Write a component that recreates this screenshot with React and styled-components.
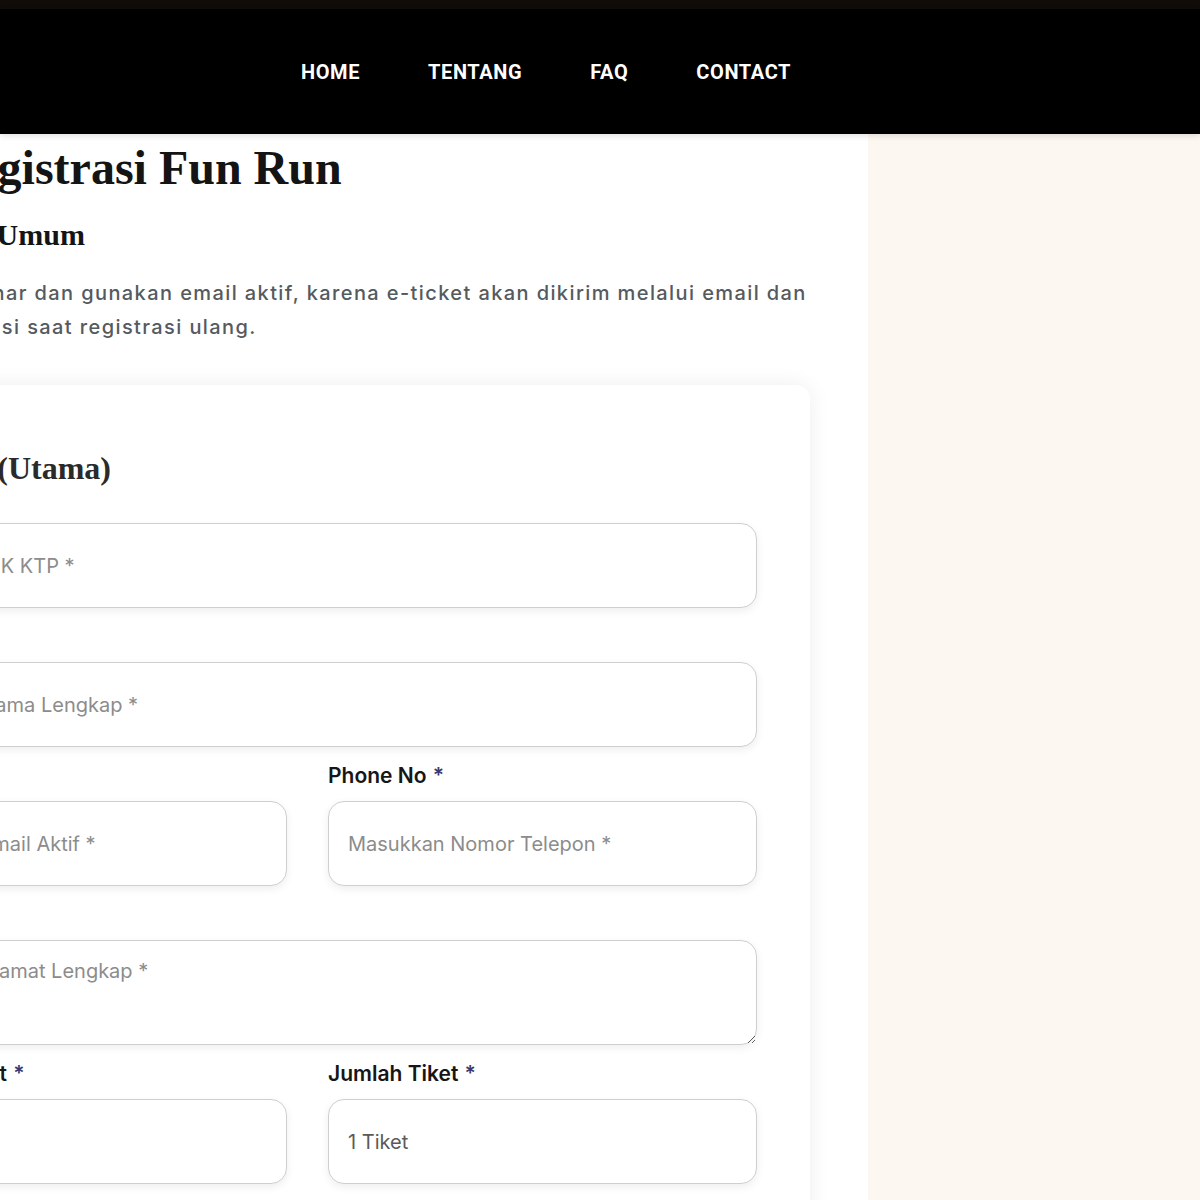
import React from 'react';
import styled, { createGlobalStyle } from 'styled-components';

const GlobalStyle = createGlobalStyle`
  body {
    margin: 0;
    background: #fcf7f1;
    overflow: hidden;
    font-family: Inter, "Noto Sans", sans-serif;
  }
  * { box-sizing: border-box; }
`;

const navItems = ['HOME', 'TENTANG', 'FAQ', 'CONTACT'];

function App() {
  return (
    <>
      <GlobalStyle />
      <TopStrip />
      <Nav>
        {navItems.map((item) => (
          <NavLink key={item}>{item}</NavLink>
        ))}
      </Nav>
      <Body>
        <Main>
          <Content>
            <Title>Form Registrasi Fun Run</Title>
            <SubTitle>Form Peserta Umum</SubTitle>
            <Intro>
              Isi data dengan benar dan gunakan email aktif, karena e-ticket akan dikirim melalui email dan
              <br />
              dan untuk verifikasi saat registrasi ulang.
            </Intro>
            <Card>
              <CardTitle>Peserta 1 (Utama)</CardTitle>
              <Field>
                <Label>NIK KTP <Req>*</Req></Label>
                <Input placeholder="Masukkan NIK KTP *" />
              </Field>
              <Field>
                <Label>Nama <Req>*</Req></Label>
                <Input placeholder="Masukkan Nama Lengkap *" />
              </Field>
              <Row>
                <Field>
                  <Label>Email <Req>*</Req></Label>
                  <Input placeholder="Masukkan Email Aktif *" />
                </Field>
                <Field>
                  <Label>Phone No <Req>*</Req></Label>
                  <Input placeholder="Masukkan Nomor Telepon *" />
                </Field>
              </Row>
              <Field>
                <Label>Alamat <Req>*</Req></Label>
                <TextArea placeholder="Masukkan Alamat Lengkap *" />
              </Field>
              <Row>
                <Field>
                  <Label>Kategori Event <Req>*</Req></Label>
                  <Select defaultValue="">
                    <option value=""></option>
                  </Select>
                </Field>
                <Field>
                  <Label>Jumlah Tiket <Req>*</Req></Label>
                  <Select defaultValue="1">
                    <option value="1">1 Tiket</option>
                    <option value="2">2 Tiket</option>
                  </Select>
                </Field>
              </Row>
            </Card>
          </Content>
        </Main>
        <Aside />
      </Body>
    </>
  );
}

export default App;

const TopStrip = styled.div`
  height: 9px;
  background: #100c09;
`;

const Nav = styled.nav`
  height: 125px;
  background: #000;
  display: flex;
  align-items: center;
  padding-left: 301px;
  gap: 68px;
  position: relative;
  z-index: 2;
  box-shadow: 0 2px 6px rgba(0, 0, 0, 0.12);
`;

const NavLink = styled.a`
  color: #fff;
  font-family: Roboto, "Liberation Sans", sans-serif;
  font-weight: 700;
  font-size: 20px;
  line-height: 24px;
  letter-spacing: 0.6px;
  cursor: pointer;
`;

const Body = styled.div`
  display: flex;
  min-height: calc(100vh - 134px);
`;

const Main = styled.main`
  width: 868px;
  flex-shrink: 0;
  background: #fff;
  overflow: hidden;
`;

const Aside = styled.aside`
  flex: 1;
  background: #fcf7f1;
`;

const Content = styled.div`
  margin-left: -195px;
  width: 1005px;
  padding-top: 5px;
`;

const Title = styled.h1`
  margin: 0 0 20px 10px;
  font-family: "Liberation Serif", serif;
  font-weight: 700;
  font-size: 48px;
  line-height: 58px;
  color: #141414;
`;

const SubTitle = styled.h2`
  margin: 0 0 23px 10px;
  font-family: "Liberation Serif", serif;
  font-weight: 700;
  font-size: 30px;
  line-height: 36px;
  color: #141414;
`;

const Intro = styled.p`
  margin: 0 0 41px 0;
  font-size: 20px;
  font-weight: 500;
  line-height: 34px;
  letter-spacing: 1.4px;
  text-indent: -13px;
  color: #555a5e;
  white-space: nowrap;
`;

const Card = styled.section`
  background: #fff;
  border-radius: 14px;
  box-shadow: 0 0 22px rgba(0, 0, 0, 0.07);
  padding: 53px 53px 40px;
`;

const CardTitle = styled.h3`
  margin: 12px 0 0 6px;
  font-family: "Liberation Serif", serif;
  font-weight: 700;
  font-size: 32px;
  line-height: 36px;
  color: #2a2a2a;
`;

const Row = styled.div`
  display: grid;
  grid-template-columns: 1fr 1fr;
  column-gap: 41px;
`;

const Field = styled.div`
  display: flex;
  flex-direction: column;
  gap: 13px;
  padding-bottom: 17px;
`;

const Label = styled.label`
  font-size: 21px;
  font-weight: 600;
  line-height: 24px;
  color: #161616;
`;

const Req = styled.span`
  color: #3b3870;
  margin-left: 1px;
`;

const inputBase = `
  width: 100%;
  border: 1.5px solid #cfcfcf;
  border-radius: 16px;
  background: #fff;
  box-shadow: 0 3px 8px rgba(0, 0, 0, 0.07);
  font-family: Inter, "Noto Sans", sans-serif;
  font-size: 20px;
  color: #555;
  padding: 0 19px;
  outline: none;
  &::placeholder { color: #8c8c8c; }
`;

const Input = styled.input`
  ${inputBase}
  height: 85px;
`;

const TextArea = styled.textarea`
  ${inputBase}
  height: 105px;
  padding-top: 18px;
  resize: vertical;
  display: block;
`;

const Select = styled.select`
  ${inputBase}
  height: 85px;
  appearance: none;
  color: #5a5a5a;
`;
